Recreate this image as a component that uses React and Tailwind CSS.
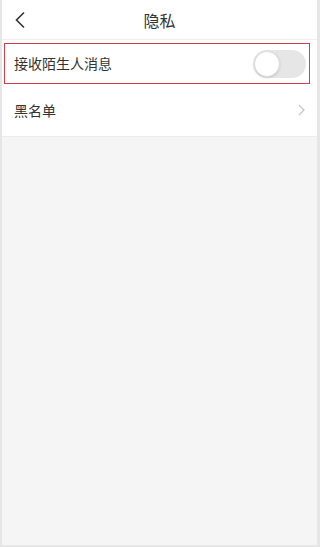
import React, { useState } from "react";

const font = { fontFamily: '"Noto Sans CJK SC", "Noto Sans", sans-serif' };

export default function App() {
  const [on, setOn] = useState(false);

  return (
    <div className="w-[320px] h-[547px] bg-[#f5f5f5] flex flex-col border-l-2 border-r-[3px] border-b-2 border-[#e6e6e6]" style={font}>
      {/* Header */}
      <div className="h-10 bg-white border-b border-[#f0f0f0] flex items-center relative shrink-0">
        <svg className="ml-[12px]" width="12" height="18" viewBox="0 0 12 18">
          <path d="M10 1.5 L2.5 9 L10 16.5" fill="none" stroke="#333" strokeWidth="1.6" />
        </svg>
        <span className="absolute left-0 right-0 text-center text-[16px] text-[#333] pointer-events-none">隐私</span>
      </div>

      {/* List */}
      <div className="bg-white pt-[3px] pl-[2px] pr-[7px] border-b border-[#ececec]">
        <div className="h-[41px] border-[1.5px] border-[#d43d4a] flex items-center justify-between pl-[9px] pr-[3px]">
          <span className="text-[14px] text-[#333]">接收陌生人消息</span>
          <button
            onClick={() => setOn(!on)}
            className={`w-[53px] h-[28px] rounded-full flex items-center p-[1px] ${on ? "bg-[#4cd964] justify-end" : "bg-[#e6e6e6] justify-start"}`}
          >
            <span className="w-[26px] h-[26px] rounded-full bg-white border border-[#dcdcdc] shadow-sm" />
          </button>
        </div>
        <div className="h-[52px] flex items-center justify-between pl-[10px] pr-[5px]">
          <span className="text-[14px] text-[#333]">黑名单</span>
          <svg width="7" height="12" viewBox="0 0 7 12">
            <path d="M1 1 L6 6 L1 11" fill="none" stroke="#c4c4c4" strokeWidth="1.2" />
          </svg>
        </div>
      </div>

      <div className="flex-1" />
    </div>
  );
}
